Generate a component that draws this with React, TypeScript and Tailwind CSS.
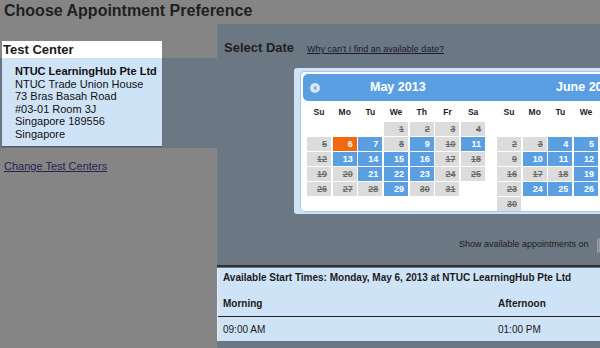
import React from 'react';

type Cell = { d: number; s: 'x' | 'a' | 'sel' } | null;

const x = (d: number): Cell => ({ d, s: 'x' });
const a = (d: number): Cell => ({ d, s: 'a' });

const MAY: Cell[][] = [
  [null, null, null, x(1), x(2), x(3), x(4)],
  [x(5), { d: 6, s: 'sel' }, a(7), x(8), a(9), x(10), a(11)],
  [x(12), a(13), a(14), a(15), a(16), x(17), x(18)],
  [x(19), x(20), a(21), a(22), a(23), x(24), x(25)],
  [x(26), x(27), x(28), a(29), x(30), x(31), null],
];

const JUNE: Cell[][] = [
  [null, null, null, null, null, null, a(1)],
  [x(2), x(3), a(4), a(5), a(6), x(7), x(8)],
  [x(9), a(10), a(11), a(12), a(13), x(14), x(15)],
  [x(16), x(17), x(18), a(19), a(20), x(21), x(22)],
  [x(23), a(24), a(25), a(26), a(27), x(28), x(29)],
  [x(30), null, null, null, null, null, null],
];

const DAYS = ['Su', 'Mo', 'Tu', 'We', 'Th', 'Fr', 'Sa'];

const Month: React.FC<{ rows: Cell[][] }> = ({ rows }) => (
  <div className="w-[178px] shrink-0">
    <div className="grid grid-cols-[repeat(7,24px)] gap-x-[1.7px] h-[20px] items-center">
      {DAYS.map((d) => (
        <div key={d} className="text-center text-[8.5px] font-bold text-[#222]">{d}</div>
      ))}
    </div>
    <div className="grid grid-cols-[repeat(7,24px)] gap-x-[1.7px] gap-y-[1px]">
      {rows.flat().map((c, i) =>
        c === null ? (
          <div key={i} className="h-[14px]" />
        ) : c.s === 'x' ? (
          <div key={i} className="h-[14px] bg-[#dcdcdc] text-right pr-[4px] text-[9px] font-bold leading-[14px] text-[#6e6e6e] line-through">
            {c.d}
          </div>
        ) : c.s === 'sel' ? (
          <div key={i} className="h-[14px] bg-[#f0690d] text-right pr-[4px] text-[9px] font-bold leading-[14px] text-white">
            {c.d}
          </div>
        ) : (
          <div key={i} className="h-[14px] bg-[#5a9fe2] text-right pr-[4px] text-[9px] font-bold leading-[14px] text-white">
            {c.d}
          </div>
        )
      )}
    </div>
  </div>
);

export default function App() {
  return (
    <div className="w-[600px] h-[348px] overflow-hidden bg-[#858585] flex flex-col font-['Liberation_Sans',Arial,sans-serif]">
      <h1 className="h-[24px] pl-[4px] pt-[2px] text-[16px] leading-[18px] font-bold text-[#1f1f1f]">
        Choose Appointment Preference
      </h1>
      <div className="flex flex-1 min-h-0">
        {/* Left column */}
        <div className="w-[217px] shrink-0 pt-[17px]">
          <div className="ml-[2px] w-[160px] h-[17px] bg-white pl-[1px] text-[13px] font-bold leading-[17px] text-[#1a1a1a]">
            Test Center
          </div>
          <div className="bg-[#6c7784] h-[90px]">
            <div className="ml-[2px] w-[160px] h-[88px] bg-[#cfe3f6] pl-[13px] pt-[7px] text-[11px] leading-[12.5px] text-[#111] shadow-[0_1px_1px_rgba(0,0,0,0.25)]">
              <div className="font-bold">NTUC LearningHub Pte Ltd</div>
              <div>NTUC Trade Union House</div>
              <div>73 Bras Basah Road</div>
              <div>#03-01 Room 3J</div>
              <div>Singapore 189556</div>
              <div>Singapore</div>
            </div>
          </div>
          <a href="#" className="block mt-[10px] ml-[4px] text-[11px] underline text-[#2b1f4d]">
            Change Test Centers
          </a>
        </div>

        {/* Right panel */}
        <div className="flex-1 min-w-0 bg-[#6c7784] overflow-hidden flex flex-col">
          <div className="flex items-baseline h-[44px] pt-[14px] pl-[7px]">
            <span className="text-[13px] font-bold text-[#1f1f1f]">Select Date</span>
            <a href="#" className="ml-[13px] text-[9px] underline text-[#1b1b2e]">
              Why can't I find an available date?
            </a>
          </div>

          <div className="ml-[77px] w-[340px] h-[146px] bg-[#cfe3f6] pl-[6px] pt-[3px] pb-[2px] rounded-l-[3px]">
            <div className="h-full bg-white rounded-l-[5px] border border-[#a9c6e3] border-r-0 pl-[2px] pt-[2px]">
              <div className="h-[27px] bg-[#5a9fe2] rounded-l-[5px] flex items-center relative">
                <span className="absolute left-[7px] top-[9px] w-[10px] h-[10px] rounded-full bg-[#d6e7f7] flex items-center justify-center">
                  <svg width="6" height="6" viewBox="0 0 6 6">
                    <path d="M4.2 0.8 L1.5 3 L4.2 5.2 Z" fill="#5a9fe2" />
                  </svg>
                </span>
                <span className="absolute left-[67px] text-[12.5px] font-bold text-white">May 2013</span>
                <span className="absolute left-[253px] text-[12.5px] font-bold text-white">June 2013</span>
              </div>
              <div className="flex pl-[4px] pt-[1px] gap-[12px]">
                <Month rows={MAY} />
                <Month rows={JUNE} />
              </div>
            </div>
          </div>

          <div className="flex items-center h-[18px] mt-[22px] pl-[242px] text-[9px] text-[#1c1c1c] whitespace-nowrap">
            Show available appointments on
            <span className="ml-[8px] inline-block w-[20px] h-[15px] rounded-[5px] border border-[#9aa0a8] bg-[#7d8794]" />
          </div>

          <div className="mt-[11px] h-[2px] bg-[#2e3034]" />
          <div className="mt-[1px] bg-[#cfe3f6] border-l border-[#e3eefa] text-[#1a1a1a] w-[383px]">
            <div className="h-[23px] pl-[5px] pt-[3px] text-[10px] font-bold leading-[14px] whitespace-nowrap">
              Available Start Times: Monday, May 6, 2013 at NTUC LearningHub Pte Ltd
            </div>
            <div className="flex h-[26px] items-center border-b border-[#222] text-[10px] font-bold">
              <span className="pl-[5px] w-[280px]">Morning</span>
              <span>Afternoon</span>
            </div>
            <div className="flex h-[24px] items-center text-[10px]">
              <span className="pl-[5px] w-[280px]">09:00 AM</span>
              <span>01:00 PM</span>
            </div>
          </div>
        </div>
      </div>
    </div>
  );
}
